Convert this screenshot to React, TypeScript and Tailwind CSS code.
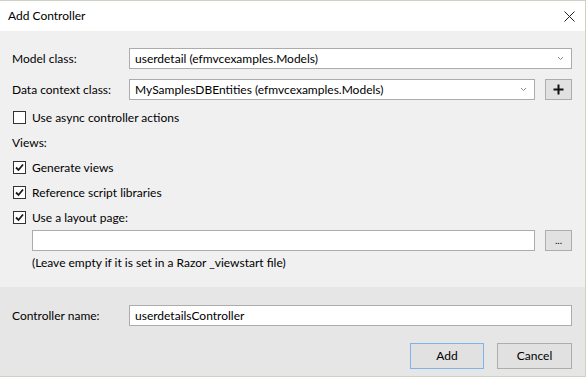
import React from "react";

const font = { fontFamily: "Lato, 'Segoe UI', sans-serif" };

const Chevron = () => (
  <svg width="7" height="5" viewBox="0 0 7 5" className="shrink-0">
    <path d="M1 1 L3.5 3.5 L6 1" fill="none" stroke="#8a8a8a" strokeWidth="1" />
  </svg>
);

const Check = () => (
  <svg width="11" height="11" viewBox="0 0 11 11">
    <path d="M2 5.5 L4.5 8 L9 2.5" fill="none" stroke="#1a1a1a" strokeWidth="1.8" />
  </svg>
);

const CheckRow = ({ label, checked }: { label: string; checked?: boolean }) => (
  <div className="flex h-[25px] items-center pl-[13px]">
    <div className="flex h-[13px] w-[13px] items-center justify-center border border-[#333333] bg-white">
      {checked && <Check />}
    </div>
    <span className="ml-[6px]">{label}</span>
  </div>
);

const Select = ({ value, className }: { value: string; className: string }) => (
  <div
    className={
      "flex h-[21px] items-center justify-between border border-[#acacac] bg-white pl-[5px] pr-[7px] " +
      className
    }
  >
    <span>{value}</span>
    <Chevron />
  </div>
);

export default function App() {
  return (
    <div
      style={font}
      className="flex h-[377px] w-[586px] flex-col border-t border-r border-b border-[#ccd2c4] bg-[#f0f0f0] text-[12px] text-black"
    >
      <div className="flex h-[30px] items-center justify-between bg-white pl-[8px] pr-[10px]">
        <span>Add Controller</span>
        <svg width="11" height="11" viewBox="0 0 11 11">
          <path d="M0.5 0.5 L10.5 10.5 M10.5 0.5 L0.5 10.5" stroke="#222" strokeWidth="1" />
        </svg>
      </div>

      <div className="flex h-[256px] flex-col pt-[17px] pr-[13px]">
        <div className="flex items-center pl-[12px]">
          <span className="w-[117px]">Model class:</span>
          <Select value="userdetail (efmvcexamples.Models)" className="flex-1" />
        </div>
        <div className="mt-[10px] flex items-center pl-[12px]">
          <span className="w-[117px]">Data context class:</span>
          <Select value="MySamplesDBEntities (efmvcexamples.Models)" className="flex-1" />
          <button className="ml-[10px] flex h-[21px] w-[27px] items-center justify-center border border-[#adadad] bg-[#e1e1e1]">
            <svg width="11" height="11" viewBox="0 0 11 11">
              <path d="M5.5 0.5 V10.5 M0.5 5.5 H10.5" stroke="#111" strokeWidth="2" />
            </svg>
          </button>
        </div>

        <div className="mt-[5px]">
          <CheckRow label="Use async controller actions" />
          <div className="flex h-[25px] items-center pl-[12px]">Views:</div>
          <CheckRow label="Generate views" checked />
          <CheckRow label="Reference script libraries" checked />
          <CheckRow label="Use a layout page:" checked />
        </div>

        <div className="flex items-center pl-[32px]">
          <div className="h-[21px] flex-1 border border-[#acacac] bg-white" />
          <button className="ml-[10px] flex h-[21px] w-[27px] items-end justify-center border border-[#adadad] bg-[#e1e1e1] pb-[5px] text-[10px] leading-none">
            ...
          </button>
        </div>
        <div className="flex h-[24px] items-center pl-[32px]">
          (Leave empty if it is set in a Razor _viewstart file)
        </div>
      </div>

      <div className="flex flex-1 flex-col bg-[#e6e6e6] pt-[18px] pr-[13px]">
        <div className="flex items-center pl-[12px]">
          <span className="w-[117px]">Controller name:</span>
          <div className="flex h-[21px] flex-1 items-center border border-[#acacac] bg-white pl-[5px]">
            userdetailsController
          </div>
        </div>
        <div className="mt-[17px] flex justify-end gap-[13px]">
          <button className="h-[26px] w-[74px] border border-[#7eb4ea] bg-[#e1e1e1]">Add</button>
          <button className="h-[26px] w-[75px] border border-[#adadad] bg-[#e1e1e1]">Cancel</button>
        </div>
      </div>
    </div>
  );
}
